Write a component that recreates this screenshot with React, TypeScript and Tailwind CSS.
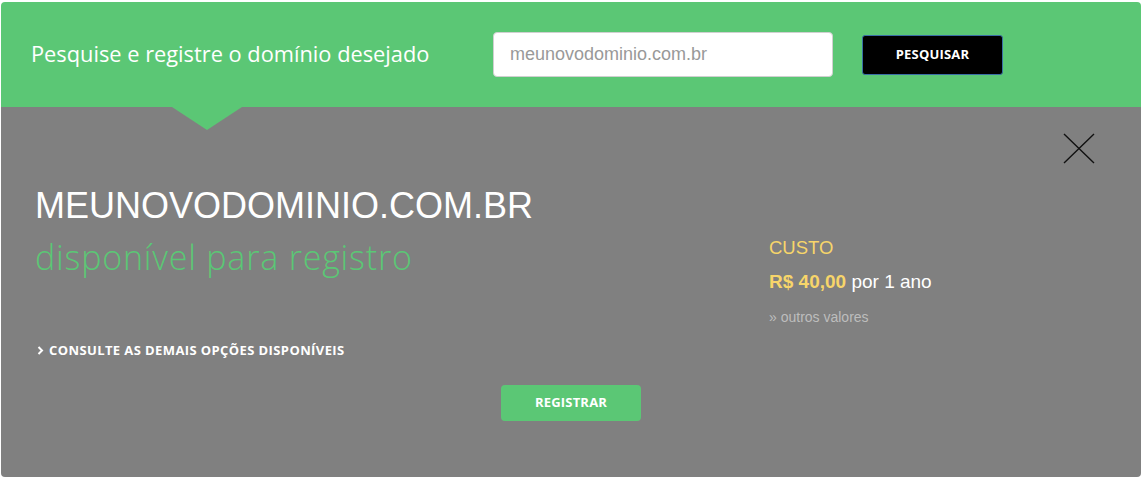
import React from "react";

export default function App() {
  return (
    <div className="w-[1146px] h-[484px] bg-white pt-[2px] pl-[1px]" style={{ fontFamily: '"Liberation Sans", Arial, sans-serif' }}>
      <div className="w-[1140px]">
        {/* Header */}
        <div className="h-[105px] bg-[#5bc775] rounded-t-[4px] flex items-center">
          <h1
            className="ml-[30px] text-[21.8px] text-white w-[462px]"
            style={{ fontFamily: '"Open Sans", sans-serif', fontWeight: 400 }}
          >
            Pesquise e registre o domínio desejado
          </h1>
          <div className="w-[340px] h-[45px] bg-white rounded-[4px] border border-[#d0d0d0] flex items-center pl-[16px]">
            <span className="text-[18px] text-[#999999]">meunovodominio.com.br</span>
          </div>
          <button
            className="ml-[29px] w-[141px] h-[40px] bg-black rounded-[3px] border border-[#3a6ea5] text-white text-[13px] font-bold tracking-[0.2px]"
            style={{ fontFamily: '"Open Sans", sans-serif' }}
          >
            PESQUISAR
          </button>
        </div>
        {/* Result panel */}
        <div className="relative h-[370px] bg-[#808080] rounded-b-[4px] flex flex-col">
          <div className="absolute top-0 left-[171px] w-0 h-0 border-l-[35px] border-r-[35px] border-t-[23px] border-l-transparent border-r-transparent border-t-[#5bc775]" />
          <button className="absolute top-[24px] left-[1060px] w-[36px] h-[36px]">
            <svg width="36" height="36" viewBox="0 0 36 36">
              <path d="M3 3 L33 32 M33 3 L3 32" stroke="#111" strokeWidth="1.4" fill="none" />
            </svg>
          </button>
          <div className="flex">
            <div className="w-[768px] pl-[34px] pt-[77px] flex flex-col">
              <div className="text-[36px] leading-[44px] text-white">MEUNOVODOMINIO.COM.BR</div>
              <div
                className="text-[34px] leading-[40px] text-[#5bc775] mt-[9px] tracking-[0.8px]"
                style={{ fontFamily: '"Open Sans", sans-serif', fontWeight: 300 }}
              >
                disponível para registro
              </div>
              <div
                className="mt-[65px] ml-[2px] text-[13px] leading-[16px] font-bold text-white flex items-center gap-[5px] tracking-[0.4px]"
                style={{ fontFamily: '"Open Sans", sans-serif' }}
              >
                <svg width="7" height="9" viewBox="0 0 7 9">
                  <path d="M1.5 1 L5 4.5 L1.5 8" stroke="white" strokeWidth="2" fill="none" />
                </svg>
                CONSULTE AS DEMAIS OPÇÕES DISPONÍVEIS
              </div>
            </div>
            <div className="pt-[130px] flex flex-col">
              <div className="text-[18.5px] leading-[22px] text-[#f7d56a]">CUSTO</div>
              <div className="text-[19px] leading-[22px] mt-[12px] text-white">
                <span className="font-bold text-[#f7d56a]">R$ 40,00</span> por 1 ano
              </div>
              <div className="text-[14px] leading-[18px] mt-[15px] text-[#bdbdbd]">» outros valores</div>
            </div>
          </div>
          <button
            className="self-center mt-[27px] w-[140px] h-[36px] bg-[#5bc775] rounded-[4px] text-white text-[13px] font-bold tracking-[0.2px]"
            style={{ fontFamily: '"Open Sans", sans-serif' }}
          >
            REGISTRAR
          </button>
        </div>
      </div>
    </div>
  );
}
